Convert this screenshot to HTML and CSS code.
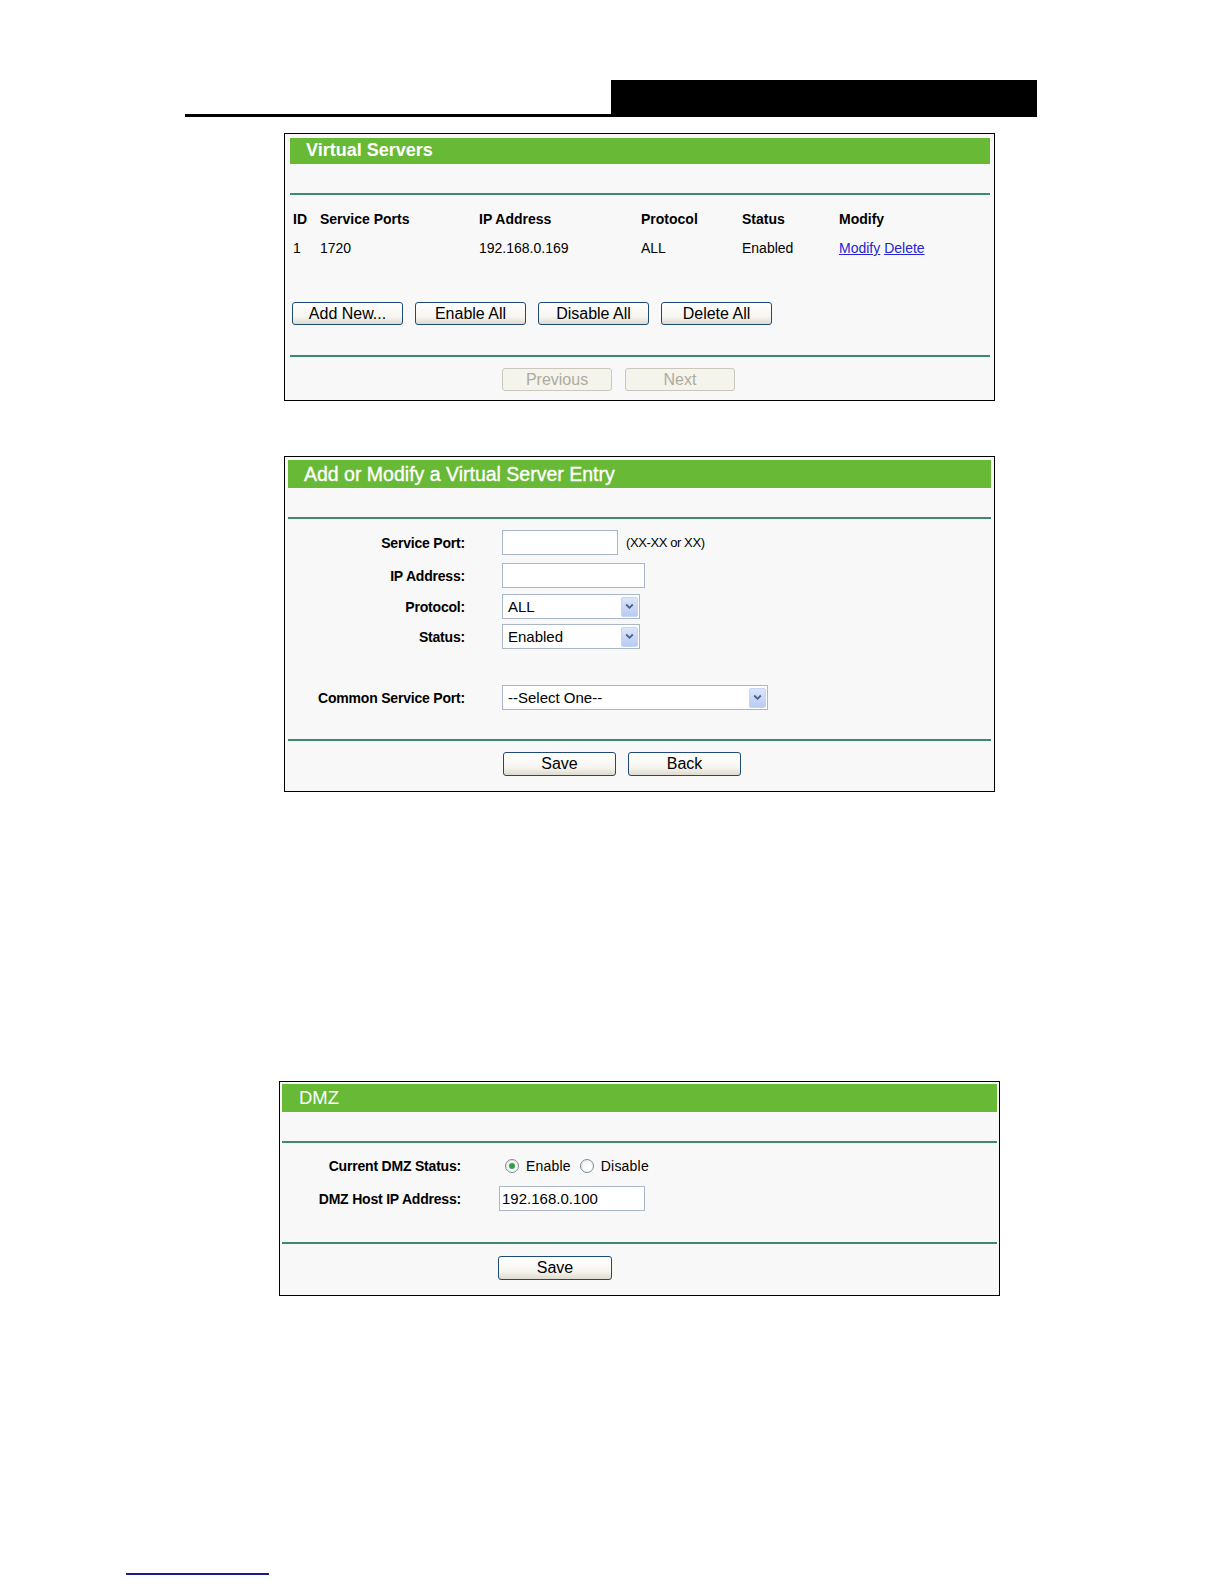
FILE: index.html
```html
<!DOCTYPE html>
<html lang="en">
<head>
<meta charset="utf-8">
<title>Virtual Servers and DMZ</title>
<link rel="stylesheet" href="styles.css">
</head>
<body>
<div class="page">
  <header class="doc-head">
    <div class="head-rule"></div>
    <div class="head-block"></div>
  </header>

  <section class="panel panel-vs">
    <h2 class="panel-title title-vs">Virtual Servers</h2>
    <div class="rule"></div>
    <div class="vs-table">
      <div class="th">ID</div>
      <div class="th">Service Ports</div>
      <div class="th">IP Address</div>
      <div class="th">Protocol</div>
      <div class="th">Status</div>
      <div class="th">Modify</div>
      <div class="td">1</div>
      <div class="td">1720</div>
      <div class="td">192.168.0.169</div>
      <div class="td">ALL</div>
      <div class="td">Enabled</div>
      <div class="td"><a href="#">Modify</a> <a href="#">Delete</a></div>
    </div>
    <div class="btn-row vs-actions">
      <button class="btn" type="button">Add New...</button>
      <button class="btn" type="button">Enable All</button>
      <button class="btn" type="button">Disable All</button>
      <button class="btn" type="button">Delete All</button>
    </div>
    <div class="rule rule-low"></div>
    <div class="btn-row vs-pager">
      <button class="btn btn-pager" type="button" disabled>Previous</button>
      <button class="btn btn-pager" type="button" disabled>Next</button>
    </div>
  </section>

  <section class="panel panel-edit">
    <h2 class="panel-title title-edit">Add or Modify a Virtual Server Entry</h2>
    <div class="rule"></div>
    <div class="form form-edit">
      <div class="frow row-port">
        <label class="flabel">Service Port:</label>
        <div class="fctrl"><span class="field w-port"></span><span class="hint">(XX-XX or XX)</span></div>
      </div>
      <div class="frow row-ip">
        <label class="flabel">IP Address:</label>
        <div class="fctrl"><span class="field w-ip"></span></div>
      </div>
      <div class="frow row-proto">
        <label class="flabel">Protocol:</label>
        <div class="fctrl">
          <span class="field select w-sel"><span class="sel-text">ALL</span><span class="sel-arrow"><svg width="9" height="7" viewBox="0 0 9 7"><path d="M1.2 1.5 L4.5 4.8 L7.8 1.5" fill="none" stroke="#4a5f86" stroke-width="1.8"/></svg></span></span>
        </div>
      </div>
      <div class="frow row-status">
        <label class="flabel">Status:</label>
        <div class="fctrl">
          <span class="field select w-sel"><span class="sel-text">Enabled</span><span class="sel-arrow"><svg width="9" height="7" viewBox="0 0 9 7"><path d="M1.2 1.5 L4.5 4.8 L7.8 1.5" fill="none" stroke="#4a5f86" stroke-width="1.8"/></svg></span></span>
        </div>
      </div>
      <div class="frow row-common">
        <label class="flabel">Common Service Port:</label>
        <div class="fctrl">
          <span class="field select w-common"><span class="sel-text">--Select One--</span><span class="sel-arrow"><svg width="9" height="7" viewBox="0 0 9 7"><path d="M1.2 1.5 L4.5 4.8 L7.8 1.5" fill="none" stroke="#4a5f86" stroke-width="1.8"/></svg></span></span>
        </div>
      </div>
    </div>
    <div class="rule rule-edit-low"></div>
    <div class="btn-row edit-actions">
      <button class="btn btn-wide" type="button">Save</button>
      <button class="btn btn-wide" type="button">Back</button>
    </div>
  </section>

  <section class="panel panel-dmz">
    <h2 class="panel-title title-dmz">DMZ</h2>
    <div class="rule"></div>
    <div class="form form-dmz">
      <div class="drow row-dmz-status">
        <label class="flabel">Current DMZ Status:</label>
        <div class="radios">
          <span class="radio checked"></span><span class="radio-text">Enable</span>
          <span class="radio"></span><span class="radio-text">Disable</span>
        </div>
      </div>
      <div class="drow row-dmz-ip">
        <label class="flabel">DMZ Host IP Address:</label>
        <div class="fctrl"><span class="field w-dmzip">192.168.0.100</span></div>
      </div>
    </div>
    <div class="rule rule-dmz-low"></div>
    <div class="btn-row dmz-actions">
      <button class="btn btn-dmz" type="button">Save</button>
    </div>
  </section>

  <div class="foot-link"></div>
</div>
</body>
</html>
```

FILE: styles.css
```css
* { box-sizing: border-box; }

body {
  margin: 0;
  background: #ffffff;
  font-family: "Liberation Sans", Arial, sans-serif;
  color: #000;
}

.page {
  width: 1224px;
  padding-top: 80px;
  display: flex;
  flex-direction: column;
  align-items: flex-start;
}

/* document header */
.doc-head {
  display: flex;
  align-items: flex-end;
  margin-left: 185px;
}
.head-rule { width: 426px; height: 3px; background: #000; }
.head-block { width: 426px; height: 37px; background: #000; }

/* panels */
.panel {
  border: 1px solid #000;
  background: #f8f8f8;
  display: flex;
  flex-direction: column;
}
.panel-vs { margin: 16px 0 0 284px; width: 711px; padding: 4px 4px 9px 5px; }
.panel-edit { margin: 55px 0 0 284px; width: 711px; padding: 3px 3px 15px; }
.panel-dmz { margin: 289px 0 0 279px; width: 721px; padding: 2px 2px 15px; }

.panel-title {
  margin: 0 0 29px;
  background: #68b936;
  color: #fff;
  font-weight: normal;
  white-space: nowrap;
}
.title-vs { height: 26px; line-height: 25px; font-size: 18px; font-weight: bold; padding-left: 16px; }
.title-edit { height: 28px; line-height: 28px; font-size: 19.5px; padding-left: 16px; -webkit-text-stroke: 0.35px #fff; }
.title-dmz { height: 28px; line-height: 27px; font-size: 18.5px; padding-left: 17px; }

.rule { height: 2px; background: #3c8a6c; flex: none; }
.rule-low { margin-top: 30px; }
.rule-edit-low { margin-top: 29px; }
.rule-dmz-low { margin-top: 31px; }

/* virtual server table */
.vs-table {
  margin-top: 12px;
  padding-left: 3px;
  display: grid;
  grid-template-columns: 27px 159px 162px 101px 97px 1fr;
  grid-auto-rows: 24px;
  row-gap: 5px;
  align-items: center;
  font-size: 14px;
}
.th { font-weight: bold; }
.td a { color: #2424d6; text-decoration: underline; }

/* buttons */
.btn-row { display: flex; gap: 12px; }
.btn {
  width: 111px;
  height: 23px;
  padding: 0;
  border: 1px solid #1f4a78;
  border-radius: 3px;
  background: linear-gradient(#ffffff, #f6f5f0 65%, #dedbcf);
  font-family: "Liberation Sans", Arial, sans-serif;
  font-size: 16px;
  line-height: 20px;
  color: #000;
}
.btn:disabled {
  border-color: #cac8bb;
  background: #f4f3ec;
  color: #aeab9c;
}
.vs-actions { margin: 42px 0 0 2px; }
.vs-pager { margin: 11px 0 0 212px; gap: 13px; }
.btn-pager { width: 110px; }

.btn-wide { width: 113px; height: 24px; }
.edit-actions { margin: 11px 0 0 215px; }
.btn-dmz { width: 114px; height: 24px; }
.dmz-actions { margin: 12px 0 0 216px; }

/* forms */
.form { display: flex; flex-direction: column; }
.form-edit { margin-top: 11px; }
.frow {
  display: grid;
  grid-template-columns: 177px auto;
  column-gap: 37px;
  align-items: center;
  height: 25px;
}
.row-ip { margin-top: 8px; }
.row-proto { margin-top: 6px; }
.row-status { margin-top: 5px; }
.row-common { margin-top: 36px; }

.flabel {
  font-size: 14px;
  font-weight: bold;
  text-align: right;
  white-space: nowrap;
  letter-spacing: -0.2px;
}
.fctrl { display: flex; align-items: center; }

.field {
  display: flex;
  align-items: center;
  height: 25px;
  border: 1px solid #a9b7c9;
  background: #fff;
  font-size: 15px;
  padding: 0 4px;
  white-space: nowrap;
}
.w-port { width: 116px; }
.w-ip { width: 143px; }
.w-sel { width: 138px; }
.w-common { width: 266px; }
.w-dmzip { width: 146px; padding-left: 2px; }

.hint { margin-left: 8px; font-size: 13px; letter-spacing: -0.4px; }

.select { justify-content: space-between; padding: 0 1px 0 5px; }
.sel-arrow {
  width: 17px;
  height: 20px;
  border: 1px solid #c6d5f4;
  border-radius: 2px;
  background: linear-gradient(#dbe5fb, #b9cbf2);
  display: flex;
  align-items: center;
  justify-content: center;
}
.sel-arrow svg { display: block; }

/* dmz form */
.form-dmz { margin-top: 12px; }
.drow {
  display: grid;
  grid-template-columns: 179px auto;
  column-gap: 38px;
  align-items: center;
}
.row-dmz-status { height: 22px; }
.row-dmz-ip { height: 25px; margin-top: 9px; }

.radios { display: flex; align-items: center; padding-left: 6px; font-size: 14px; }
.radio {
  width: 14px;
  height: 14px;
  border-radius: 50%;
  border: 1px solid #7b8b9b;
  background: radial-gradient(circle at 60% 60%, #ffffff 30%, #dcdcd8);
  display: flex;
  align-items: center;
  justify-content: center;
  flex: none;
}
.radio.checked::after {
  content: "";
  width: 6px;
  height: 6px;
  border-radius: 50%;
  background: #2fa043;
}
.radio-text { margin-left: 7px; margin-right: 9px; letter-spacing: 0.2px; }

/* footer link underline */
.foot-link {
  margin: 277px 0 0 126px;
  width: 143px;
  height: 2px;
  background: #1b1b8c;
}
```
